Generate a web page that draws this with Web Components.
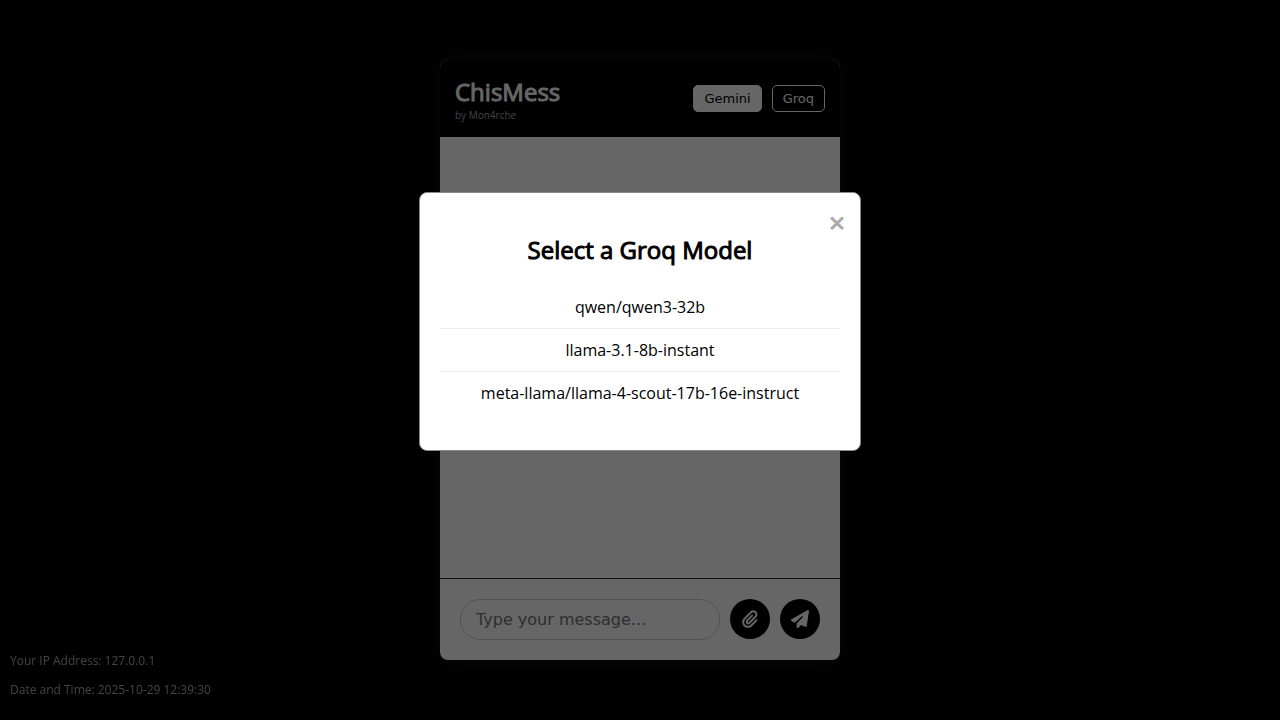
<!DOCTYPE html>
<html lang="en">
<head>
<meta charset="utf-8">
<meta name="viewport" content="width=device-width, initial-scale=1">
<title>ChisMess</title>
<style>
  body { margin: 0; background: #000; color: #000; font-family: "Open Sans", sans-serif; font-size: 16px; }
</style>
</head>
<body>
<chat-page>
  <chat-window>
    <chat-header slot="header" heading="ChisMess" byline="by Mon4rche">
      <provider-button active>Gemini</provider-button>
      <provider-button>Groq</provider-button>
    </chat-header>
    <message-form slot="footer"></message-form>
  </chat-window>
  <visitor-info slot="info">
    <p>Your IP Address: 127.0.0.1</p>
    <p>Date and Time: 2025-10-29 12:39:30</p>
  </visitor-info>
  <model-dialog slot="dialog" heading="Select a Groq Model">
    <model-option>qwen/qwen3-32b</model-option>
    <model-option>llama-3.1-8b-instant</model-option>
    <model-option>meta-llama/llama-4-scout-17b-16e-instruct</model-option>
  </model-dialog>
</chat-page>
<script>
  const define = (name, render) => customElements.define(name, class extends HTMLElement {
    constructor() {
      super();
      this.attachShadow({ mode: "open" }).innerHTML = render(this);
    }
  });

  define("chat-page", () => `
    <style>
      :host { display: flex; align-items: center; justify-content: center; min-height: 100vh; }
      ::slotted(visitor-info) { position: fixed; left: 10px; bottom: 10px; }
    </style>
    <slot></slot><slot name="info"></slot><slot name="dialog"></slot>`);

  define("chat-window", () => `
    <style>
      :host { display: flex; flex-direction: column; width: 100%; max-width: 400px; height: 600px; max-height: 100vh;
        overflow: hidden; border-radius: 8px; background: #fff; box-shadow: 0 0 20px rgba(255, 255, 255, .1); }
      main { flex: 1; overflow-y: auto; }
    </style>
    <slot name="header"></slot><main></main><slot name="footer"></slot>`);

  define("chat-header", el => `
    <style>
      :host { display: block; }
      header { display: flex; align-items: center; justify-content: space-between; padding: 15px; background: #000; color: #fff; }
      h1 { margin: 0; font-size: 24px; line-height: 33px; font-weight: 400; -webkit-text-stroke: 1px currentColor; }
      p { margin: 0; font-size: 10px; line-height: 14px; color: #aaa; }
      nav { display: flex; gap: 10px; }
    </style>
    <header>
      <div><h1>${el.getAttribute("heading")}</h1><p>${el.getAttribute("byline")}</p></div>
      <nav><slot></slot></nav>
    </header>`);

  define("provider-button", () => `
    <style>
      :host { display: block; }
      button { display: block; padding: 5px 10px; border: 1px solid #fff; border-radius: 5px; background: #000; color: #fff;
        font: 13px/15px "DejaVu Sans", sans-serif; cursor: pointer; }
      :host([active]) button { background: #fff; color: #000; }
    </style>
    <button type="button"><slot></slot></button>`);

  define("message-form", () => `
    <style>
      :host { display: block; }
      form { display: flex; gap: 10px; padding: 20px; border-top: 1px solid #333; }
      input { flex: 1; min-width: 0; padding: 10px 15px; border: 1px solid #ccc; border-radius: 20px; background: #fff;
        font: 16px/19px "DejaVu Sans", sans-serif; }
      input::placeholder { color: #757575; }
      button { display: flex; align-items: center; justify-content: center; width: 40px; height: 40px; padding: 0;
        border: 0; border-radius: 50%; background: #000; color: #fff; cursor: pointer; }
      svg { height: 18px; fill: currentColor; }
    </style>
    <form>
      <input type="text" placeholder="Type your message..." aria-label="Message">
      <button type="button" aria-label="Attach a file">
        <svg viewBox="0 0 448 512" aria-hidden="true"><path d="M364.2 83.8c-24.4-24.4-64-24.4-88.4 0l-184 184c-42.1 42.1-42.1 110.3 0 152.4s110.3 42.1 152.4 0l152-152c10.9-10.9 28.7-10.9 39.6 0s10.9 28.7 0 39.6l-152 152c-64 64-167.6 64-231.6 0s-64-167.6 0-231.6l184-184c46.3-46.3 121.3-46.3 167.6 0s46.3 121.3 0 167.6l-176 176c-28.6 28.6-75 28.6-103.6 0s-28.6-75 0-103.6l144-144c10.9-10.9 28.7-10.9 39.6 0s10.9 28.7 0 39.6l-144 144c-6.7 6.7-6.7 17.7 0 24.4s17.7 6.7 24.4 0l176-176c24.4-24.4 24.4-64 0-88.4z"/></svg>
      </button>
      <button type="submit" aria-label="Send">
        <svg viewBox="0 0 512 512" aria-hidden="true"><path d="M498.1 5.6c10.1 7 15.4 19.1 13.5 31.2l-64 416c-1.5 9.7-7.4 18.2-16 23s-18.9 5.4-28 1.6L284 427.7l-68.5 74.1c-8.9 9.7-22.9 12.9-35.2 8.1S160 493.2 160 480V396.4c0-4 1.5-7.8 4.2-10.7L331.8 202.8c5.8-6.3 5.6-16-.4-22s-15.7-6.4-22-.7L106 360.8 17.7 316.6C7.1 311.3 .3 300.7 0 288.9s5.9-22.8 16.1-28.7l448-256c10.7-6.1 23.9-5.5 34 1.4z"/></svg>
      </button>
    </form>`);

  define("visitor-info", () => `
    <style>
      :host { display: block; font-size: 12px; line-height: 17px; color: #aaa; }
      ::slotted(p) { margin: 12px 0; }
    </style>
    <slot></slot>`);

  define("model-dialog", el => `
    <style>
      :host { display: block; position: fixed; inset: 0; z-index: 1; overflow: auto; background: rgba(0, 0, 0, .6); }
      section { position: relative; box-sizing: border-box; width: 100%; max-width: 442px; margin: 15% auto; padding: 20px;
        border: 1px solid #888; border-radius: 8px; background: #fff; text-align: center; }
      .close { position: absolute; top: 10px; right: 15px; padding: 0; border: 0; background: none; color: #aaa;
        font: 28px/38px "Open Sans", sans-serif; -webkit-text-stroke: 1px currentColor; cursor: pointer; }
      h2 { margin: 20px 0; font-size: 24px; line-height: 33px; font-weight: 400; -webkit-text-stroke: 1px currentColor; }
      div { margin-bottom: 16px; }
    </style>
    <section role="dialog" aria-modal="true" aria-labelledby="title">
      <button class="close" type="button" aria-label="Close">×</button>
      <h2 id="title">${el.getAttribute("heading")}</h2>
      <div role="list"><slot></slot></div>
    </section>`);

  define("model-option", () => `
    <style>
      :host { display: block; border-bottom: 1px solid #eee; }
      :host(:last-child) { border-bottom: 0; }
      button { display: block; width: 100%; padding: 10px; border: 0; background: none; color: inherit;
        font: inherit; line-height: 22px; cursor: pointer; }
    </style>
    <button type="button"><slot></slot></button>`);
</script>
</body>
</html>
